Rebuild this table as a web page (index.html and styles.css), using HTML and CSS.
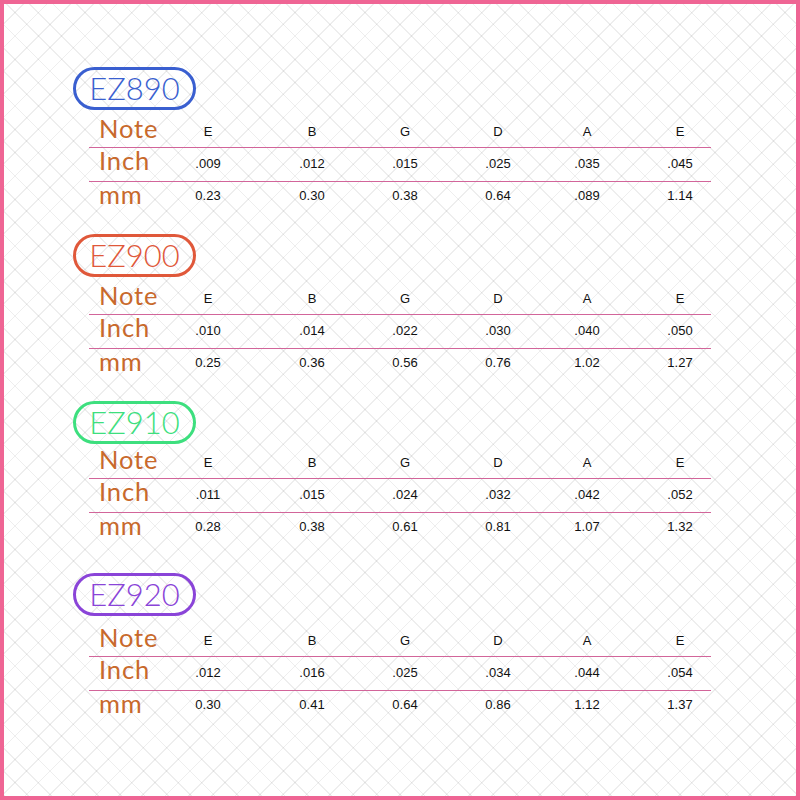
FILE: index.html
```html
<!DOCTYPE html>
<html>
<head>
<meta charset="utf-8">
<link rel="stylesheet" href="styles.css">
</head>
<body>
<div class="frame">
  <section class="block">
    <div class="badge badge-blue">EZ890</div>
    <div class="table">
      <div class="row row-note"><span class="label">Note</span><span class="cell">E</span><span class="cell">B</span><span class="cell">G</span><span class="cell">D</span><span class="cell">A</span><span class="cell">E</span></div>
      <div class="row row-inch"><span class="label">Inch</span><span class="cell">.009</span><span class="cell">.012</span><span class="cell">.015</span><span class="cell">.025</span><span class="cell">.035</span><span class="cell">.045</span></div>
      <div class="row row-mm"><span class="label">mm</span><span class="cell">0.23</span><span class="cell">0.30</span><span class="cell">0.38</span><span class="cell">0.64</span><span class="cell">.089</span><span class="cell">1.14</span></div>
    </div>
  </section>
  <section class="block">
    <div class="badge badge-red">EZ900</div>
    <div class="table">
      <div class="row row-note"><span class="label">Note</span><span class="cell">E</span><span class="cell">B</span><span class="cell">G</span><span class="cell">D</span><span class="cell">A</span><span class="cell">E</span></div>
      <div class="row row-inch"><span class="label">Inch</span><span class="cell">.010</span><span class="cell">.014</span><span class="cell">.022</span><span class="cell">.030</span><span class="cell">.040</span><span class="cell">.050</span></div>
      <div class="row row-mm"><span class="label">mm</span><span class="cell">0.25</span><span class="cell">0.36</span><span class="cell">0.56</span><span class="cell">0.76</span><span class="cell">1.02</span><span class="cell">1.27</span></div>
    </div>
  </section>
  <section class="block block-tight">
    <div class="badge badge-green">EZ910</div>
    <div class="table">
      <div class="row row-note"><span class="label">Note</span><span class="cell">E</span><span class="cell">B</span><span class="cell">G</span><span class="cell">D</span><span class="cell">A</span><span class="cell">E</span></div>
      <div class="row row-inch"><span class="label">Inch</span><span class="cell">.011</span><span class="cell">.015</span><span class="cell">.024</span><span class="cell">.032</span><span class="cell">.042</span><span class="cell">.052</span></div>
      <div class="row row-mm"><span class="label">mm</span><span class="cell">0.28</span><span class="cell">0.38</span><span class="cell">0.61</span><span class="cell">0.81</span><span class="cell">1.07</span><span class="cell">1.32</span></div>
    </div>
  </section>
  <section class="block block-loose">
    <div class="badge badge-purple">EZ920</div>
    <div class="table">
      <div class="row row-note"><span class="label">Note</span><span class="cell">E</span><span class="cell">B</span><span class="cell">G</span><span class="cell">D</span><span class="cell">A</span><span class="cell">E</span></div>
      <div class="row row-inch"><span class="label">Inch</span><span class="cell">.012</span><span class="cell">.016</span><span class="cell">.025</span><span class="cell">.034</span><span class="cell">.044</span><span class="cell">.054</span></div>
      <div class="row row-mm"><span class="label">mm</span><span class="cell">0.30</span><span class="cell">0.41</span><span class="cell">0.64</span><span class="cell">0.86</span><span class="cell">1.12</span><span class="cell">1.37</span></div>
    </div>
  </section>
</div>
</body>
</html>
```

FILE: styles.css
```css
html, body {
  margin: 0;
  padding: 0;
}

body {
  width: 800px;
  height: 800px;
  font-family: "Liberation Sans", Arial, sans-serif;
}

.frame {
  box-sizing: border-box;
  width: 800px;
  height: 800px;
  border: 4px solid #ef6594;
  background-color: #ffffff;
  background-image:
    repeating-linear-gradient(45deg, rgba(0,0,0,0.065) 0 1.3px, transparent 1.3px 16.5px),
    repeating-linear-gradient(-45deg, rgba(0,0,0,0.065) 0 1.3px, transparent 1.3px 16.5px);
  padding: 63px 0 0 69px;
  display: flex;
  flex-direction: column;
  gap: 20px;
}

.block {
  display: flex;
  flex-direction: column;
  align-items: flex-start;
}

.block-tight .row-note {
  height: 35px;
}

.block-loose {
  margin-top: 8px;
}

.block-loose .row-note {
  height: 41px;
}

.badge {
  box-sizing: border-box;
  height: 43px;
  width: 123px;
  border: 3px solid;
  border-radius: 22px;
  font-family: "Lato", "Noto Sans", sans-serif;
  font-weight: 300;
  font-size: 31px;
  line-height: 37px;
  text-align: center;
}

.badge-blue { color: #3a5fd0; border-color: #3a5fd0; }
.badge-red { color: #e0583a; border-color: #e0583a; }
.badge-green { color: #3ddf7e; border-color: #3ddf7e; }
.badge-purple { color: #8a44d8; border-color: #8a44d8; }

.table {
  margin-left: 16px;
  width: 622px;
}

.row {
  box-sizing: border-box;
  display: grid;
  grid-template-columns: 67px 104px 104px 82px 104px 74px 112px;
  align-items: end;
}

.row-note {
  height: 38px;
  border-bottom: 1px solid #d2659a;
  padding-bottom: 6px;
}

.row-inch {
  height: 34px;
  border-bottom: 1px solid #d2659a;
  padding-bottom: 8px;
}

.row-mm {
  height: 32px;
  padding-bottom: 10px;
}

.label {
  padding-left: 10px;
  font-family: "Lato", "Noto Sans", sans-serif;
  font-weight: 400;
  font-size: 25.5px;
  line-height: 25px;
  color: #c8692c;
  letter-spacing: 0.9px;
  white-space: nowrap;
}

.cell {
  text-align: center;
  font-size: 13px;
  line-height: 15px;
  color: #111111;
  padding-bottom: 2px;
}

.row-mm .cell {
  padding-bottom: 4px;
}
```
